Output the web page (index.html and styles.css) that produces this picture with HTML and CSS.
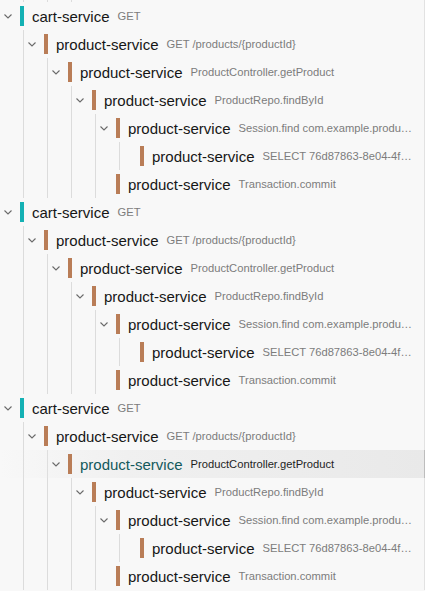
FILE: index.html
```html
<!DOCTYPE html>
<html>
<head>
<meta charset="utf-8">
<link rel="stylesheet" href="styles.css">
</head>
<body>
<div class="tree">
  <div class="top-spacer"></div>

  <div class="node">
    <div class="row l0"><span class="chev"><svg width="8" height="5" viewBox="0 0 8 5"><polyline points="0.5,0.5 4,4 7.5,0.5"/></svg></span><span class="bar teal"></span><span class="name">cart-service</span><span class="desc">GET</span></div>
    <div class="children g0">
      <div class="node">
        <div class="row l1"><span class="chev"><svg width="8" height="5" viewBox="0 0 8 5"><polyline points="0.5,0.5 4,4 7.5,0.5"/></svg></span><span class="bar brown"></span><span class="name">product-service</span><span class="desc">GET /products/{productId}</span></div>
        <div class="children g1">
          <div class="node">
            <div class="row l2"><span class="chev"><svg width="8" height="5" viewBox="0 0 8 5"><polyline points="0.5,0.5 4,4 7.5,0.5"/></svg></span><span class="bar brown"></span><span class="name">product-service</span><span class="desc">ProductController.getProduct</span></div>
            <div class="children g2">
              <div class="node">
                <div class="row l3"><span class="chev"><svg width="8" height="5" viewBox="0 0 8 5"><polyline points="0.5,0.5 4,4 7.5,0.5"/></svg></span><span class="bar brown"></span><span class="name">product-service</span><span class="desc">ProductRepo.findById</span></div>
                <div class="children g3">
                  <div class="node">
                    <div class="row l4"><span class="chev"><svg width="8" height="5" viewBox="0 0 8 5"><polyline points="0.5,0.5 4,4 7.5,0.5"/></svg></span><span class="bar brown"></span><span class="name">product-service</span><span class="desc">Session.find com.example.produ…</span></div>
                    <div class="children g4">
                      <div class="row l5"><span class="chev"></span><span class="bar brown"></span><span class="name">product-service</span><span class="desc">SELECT 76d87863-8e04-4f…</span></div>
                    </div>
                  </div>
                  <div class="row l4"><span class="chev"></span><span class="bar brown"></span><span class="name">product-service</span><span class="desc">Transaction.commit</span></div>
                </div>
              </div>
            </div>
          </div>
        </div>
      </div>
    </div>
  </div>

  <div class="node">
    <div class="row l0"><span class="chev"><svg width="8" height="5" viewBox="0 0 8 5"><polyline points="0.5,0.5 4,4 7.5,0.5"/></svg></span><span class="bar teal"></span><span class="name">cart-service</span><span class="desc">GET</span></div>
    <div class="children g0">
      <div class="node">
        <div class="row l1"><span class="chev"><svg width="8" height="5" viewBox="0 0 8 5"><polyline points="0.5,0.5 4,4 7.5,0.5"/></svg></span><span class="bar brown"></span><span class="name">product-service</span><span class="desc">GET /products/{productId}</span></div>
        <div class="children g1">
          <div class="node">
            <div class="row l2"><span class="chev"><svg width="8" height="5" viewBox="0 0 8 5"><polyline points="0.5,0.5 4,4 7.5,0.5"/></svg></span><span class="bar brown"></span><span class="name">product-service</span><span class="desc">ProductController.getProduct</span></div>
            <div class="children g2">
              <div class="node">
                <div class="row l3"><span class="chev"><svg width="8" height="5" viewBox="0 0 8 5"><polyline points="0.5,0.5 4,4 7.5,0.5"/></svg></span><span class="bar brown"></span><span class="name">product-service</span><span class="desc">ProductRepo.findById</span></div>
                <div class="children g3">
                  <div class="node">
                    <div class="row l4"><span class="chev"><svg width="8" height="5" viewBox="0 0 8 5"><polyline points="0.5,0.5 4,4 7.5,0.5"/></svg></span><span class="bar brown"></span><span class="name">product-service</span><span class="desc">Session.find com.example.produ…</span></div>
                    <div class="children g4">
                      <div class="row l5"><span class="chev"></span><span class="bar brown"></span><span class="name">product-service</span><span class="desc">SELECT 76d87863-8e04-4f…</span></div>
                    </div>
                  </div>
                  <div class="row l4"><span class="chev"></span><span class="bar brown"></span><span class="name">product-service</span><span class="desc">Transaction.commit</span></div>
                </div>
              </div>
            </div>
          </div>
        </div>
      </div>
    </div>
  </div>

  <div class="node">
    <div class="row l0"><span class="chev"><svg width="8" height="5" viewBox="0 0 8 5"><polyline points="0.5,0.5 4,4 7.5,0.5"/></svg></span><span class="bar teal"></span><span class="name">cart-service</span><span class="desc">GET</span></div>
    <div class="children g0">
      <div class="node">
        <div class="row l1"><span class="chev"><svg width="8" height="5" viewBox="0 0 8 5"><polyline points="0.5,0.5 4,4 7.5,0.5"/></svg></span><span class="bar brown"></span><span class="name">product-service</span><span class="desc">GET /products/{productId}</span></div>
        <div class="children g1">
          <div class="node">
            <div class="row l2 hover"><span class="chev"><svg width="8" height="5" viewBox="0 0 8 5"><polyline points="0.5,0.5 4,4 7.5,0.5"/></svg></span><span class="bar brown"></span><span class="name">product-service</span><span class="desc">ProductController.getProduct</span></div>
            <div class="children g2">
              <div class="node">
                <div class="row l3"><span class="chev"><svg width="8" height="5" viewBox="0 0 8 5"><polyline points="0.5,0.5 4,4 7.5,0.5"/></svg></span><span class="bar brown"></span><span class="name">product-service</span><span class="desc">ProductRepo.findById</span></div>
                <div class="children g3">
                  <div class="node">
                    <div class="row l4"><span class="chev"><svg width="8" height="5" viewBox="0 0 8 5"><polyline points="0.5,0.5 4,4 7.5,0.5"/></svg></span><span class="bar brown"></span><span class="name">product-service</span><span class="desc">Session.find com.example.produ…</span></div>
                    <div class="children g4">
                      <div class="row l5"><span class="chev"></span><span class="bar brown"></span><span class="name">product-service</span><span class="desc">SELECT 76d87863-8e04-4f…</span></div>
                    </div>
                  </div>
                  <div class="row l4"><span class="chev"></span><span class="bar brown"></span><span class="name">product-service</span><span class="desc">Transaction.commit</span></div>
                </div>
              </div>
            </div>
          </div>
        </div>
      </div>
    </div>
  </div>
</div>
</body>
</html>
```

FILE: styles.css
```css
html, body {
  margin: 0;
  padding: 0;
  background: #f8f8f8;
}

.tree {
  width: 425px;
  font-family: "Liberation Sans", Arial, Helvetica, sans-serif;
  background: #f8f8f8;
}

.top-spacer {
  height: 2px;
  border-right: 1px solid #e2e2e2;
  background:
    linear-gradient(#dcdcdc, #dcdcdc) no-repeat 23px 0 / 1px 100%,
    linear-gradient(#dcdcdc, #dcdcdc) no-repeat 47px 0 / 1px 100%,
    linear-gradient(#dcdcdc, #dcdcdc) no-repeat 71px 0 / 1px 100%;
}

.row {
  height: 28px;
  display: flex;
  align-items: center;
  box-sizing: border-box;
  border-right: 1px solid #e2e2e2;
  padding-right: 7px;
  white-space: nowrap;
}

.l0 { padding-left: 4px; }
.l1 { padding-left: 28px; }
.l2 { padding-left: 52px; }
.l3 { padding-left: 76px; }
.l4 { padding-left: 100px; }
.l5 { padding-left: 124px; }

.children {
  background-repeat: no-repeat;
  background-size: 1px 100%;
  background-image: linear-gradient(#dcdcdc, #dcdcdc);
}
.g0 { background-position: 23px 0; }
.g1 { background-position: 47px 0; }
.g2 { background-position: 71px 0; }
.g3 { background-position: 95px 0; }
.g4 { background-position: 119px 0; }

.chev {
  flex: 0 0 8px;
  width: 8px;
  height: 5px;
  margin-right: 8px;
  display: flex;
}
.chev svg {
  display: block;
}
.chev polyline {
  fill: none;
  stroke: #6a6a6a;
  stroke-width: 1.1;
}

.bar {
  flex: 0 0 4px;
  width: 4px;
  height: 20px;
  margin-right: 8px;
}
.teal { background: #14b1b4; }
.brown { background: #b97d57; }

.name {
  flex: 0 0 auto;
  font-size: 15px;
  color: #161616;
  margin-right: 8px;
}

.desc {
  flex: 0 0 auto;
  font-size: 11.2px;
  color: #7c7c7c;
}

.hover {
  background: linear-gradient(to right, rgba(232, 232, 232, 0) 0%, rgba(232, 232, 232, 0.5) 30%, #e9e9e9 100%);
  border-right-color: #bdbdbd;
}
.hover .name { color: #13595c; }
.hover .desc { color: #1e1e1e; }
```
